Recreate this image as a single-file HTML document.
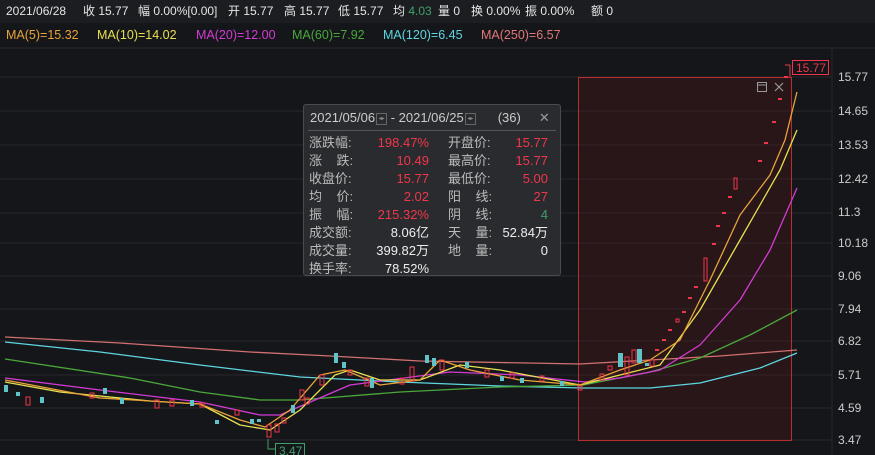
<!DOCTYPE html><html><head><meta charset="utf-8"><style>
body{margin:0;width:875px;height:455px;background:#15161a;overflow:hidden;font-family:"Liberation Sans","Noto Sans CJK SC",sans-serif;position:relative}
.t1{position:absolute;left:0;top:0;width:875px;height:23px;background:#1c1d21;color:#e6e6e6;font-size:12px;line-height:23px;white-space:nowrap}
.t1 span,.t2 span{position:absolute;top:0}
.t2{position:absolute;left:0;top:24px;width:875px;height:22px;font-size:12.5px;line-height:22px;white-space:nowrap}
.tip{position:absolute;left:303px;top:104px;width:256px;height:170px;background:#2a2b2f;border:1px solid #4a4b50;border-radius:3px;color:#bbb;font-size:13px}
.tip .h{position:absolute;left:6px;top:4px;color:#ccc;white-space:nowrap;line-height:18px}
.r{position:absolute;white-space:nowrap;line-height:18px;height:18px}
.red{color:#f0364a}.wh{color:#eee}.gr{color:#3fa06a}
.ax{position:absolute;left:838px;color:#ccc;font-size:12px}
.box{display:inline-block;width:9px;height:10px;border:1px solid #666;vertical-align:middle;font-size:6px;line-height:10px;color:#888;text-align:center}
</style></head><body>
<div class="t1"><span style="left:6px">2021/06/28</span><span style="left:83px">收 15.77</span><span style="left:138px">幅 0.00%[0.00]</span><span style="left:228px">开 15.77</span><span style="left:284px">高 15.77</span><span style="left:338px">低 15.77</span><span style="left:393px">均 <b style="font-weight:normal;color:#3fa06a">4.03</b></span><span style="left:438px">量 0</span><span style="left:471px">换 0.00%</span><span style="left:525px">振 0.00%</span><span style="left:591px">额 0</span></div>
<div class="t2"><span style="left:6px;color:#e8a33a">MA(5)=15.32</span><span style="left:97px;color:#e8e050">MA(10)=14.02</span><span style="left:196px;color:#d43bd4">MA(20)=12.00</span><span style="left:292px;color:#4aa83a">MA(60)=7.92</span><span style="left:383px;color:#5ed6e0">MA(120)=6.45</span><span style="left:481px;color:#e07878">MA(250)=6.57</span></div>
<svg width="875" height="455" style="position:absolute;left:0;top:0">
<g stroke="#26272c" stroke-width="1">
<line x1="0" y1="77" x2="832" y2="77"/><line x1="0" y1="111" x2="832" y2="111"/><line x1="0" y1="145" x2="832" y2="145"/><line x1="0" y1="179" x2="832" y2="179"/><line x1="0" y1="213" x2="832" y2="213"/><line x1="0" y1="243" x2="832" y2="243"/><line x1="0" y1="276" x2="832" y2="276"/><line x1="0" y1="309" x2="832" y2="309"/><line x1="0" y1="341" x2="832" y2="341"/><line x1="0" y1="375" x2="832" y2="375"/><line x1="0" y1="408" x2="832" y2="408"/><line x1="0" y1="440" x2="832" y2="440"/>
<line x1="832" y1="47" x2="832" y2="455"/><line x1="0" y1="48" x2="875" y2="48"/>
</g>
<rect x="578.5" y="77.5" width="213" height="363" fill="rgba(110,25,25,0.22)" stroke="#b8302e"/>
<g fill="none" stroke-width="1.3" stroke-linejoin="round">
<polyline stroke="#d07070" points="5,337 120,343 250,352 330,356 420,361 580,364 650,360 720,356 797,350"/>
<polyline stroke="#5ed6e0" points="5,342 100,352 200,365 300,377 400,382 500,386 583,388 650,388 700,383 760,368 797,353"/>
<polyline stroke="#4aa83a" points="5,359 130,378 200,392 260,400 300,400 400,392 500,387 583,385 650,372 700,358 750,335 797,310"/>
<polyline stroke="#d43bd4" points="5,378 100,390 200,402 260,415 280,415 350,385 450,372 520,375 585,382 620,378 660,370 700,345 740,300 770,250 797,188"/>
<polyline stroke="#e8e050" points="5,382 60,392 150,401 200,404 240,425 270,430 300,410 335,375 350,370 380,380 420,380 460,365 500,370 580,385 620,375 660,365 700,310 740,240 780,170 797,130"/>
<polyline stroke="#e8a33a" points="5,380 100,398 200,404 240,420 265,427 290,410 320,375 345,370 380,385 420,380 440,360 470,370 520,380 580,385 620,370 650,360 680,340 710,280 740,215 770,175 785,140 797,92"/>
</g>
<g stroke="#f0364a" fill="none">
<rect x="26" y="397" width="4" height="8"/><rect x="90" y="393" width="4" height="5"/><rect x="155" y="400" width="4" height="8"/><rect x="170" y="400" width="4" height="6"/><rect x="200" y="403" width="4" height="4"/><rect x="235" y="410" width="4" height="5"/><rect x="267" y="425" width="4" height="12"/><rect x="275" y="424" width="4" height="8"/><rect x="282" y="418" width="4" height="5"/><rect x="300" y="390" width="4" height="10"/><rect x="305" y="398" width="4" height="6"/><rect x="320" y="375" width="4" height="10"/><rect x="348" y="370" width="4" height="5"/><rect x="365" y="378" width="4" height="8"/><rect x="400" y="378" width="4" height="6"/><rect x="410" y="367" width="4" height="14"/><rect x="440" y="360" width="4" height="10"/><rect x="485" y="370" width="4" height="7"/><rect x="510" y="373" width="4" height="5"/><rect x="540" y="376" width="4" height="5"/><rect x="578" y="386" width="4" height="4"/><rect x="600" y="374" width="4" height="6"/><rect x="608" y="366" width="4" height="4"/><rect x="625" y="357" width="4" height="18"/><rect x="632" y="350" width="4" height="13"/><rect x="650" y="360" width="4" height="6"/><rect x="676" y="319" width="3" height="3"/><rect x="704" y="258" width="3" height="23"/><rect x="734" y="178" width="3" height="11"/>
</g>
<g stroke="#f0364a" stroke-width="2">
<line x1="655" y1="350" x2="659" y2="350"/><line x1="662" y1="340" x2="666" y2="340"/><line x1="668" y1="330" x2="672" y2="330"/><line x1="682" y1="312" x2="686" y2="312"/><line x1="688" y1="298" x2="692" y2="298"/><line x1="694" y1="287" x2="698" y2="287"/><line x1="712" y1="244" x2="716" y2="244"/><line x1="716" y1="226" x2="720" y2="226"/><line x1="722" y1="213" x2="726" y2="213"/><line x1="728" y1="197" x2="732" y2="197"/><line x1="758" y1="161" x2="762" y2="161"/><line x1="764" y1="143" x2="768" y2="143"/><line x1="772" y1="122" x2="776" y2="122"/><line x1="778" y1="99" x2="782" y2="99"/><line x1="784" y1="77" x2="788" y2="77"/>
</g>
<g fill="#5fc3c8">
<rect x="4" y="385" width="4" height="7"/><rect x="16" y="392" width="4" height="4"/><rect x="40" y="397" width="4" height="6"/><rect x="103" y="388" width="4" height="6"/><rect x="120" y="398" width="4" height="6"/><rect x="190" y="400" width="4" height="6"/><rect x="215" y="420" width="4" height="4"/><rect x="250" y="419" width="4" height="5"/><rect x="257" y="419" width="4" height="3"/><rect x="291" y="405" width="4" height="8"/><rect x="334" y="353" width="4" height="10"/><rect x="342" y="362" width="4" height="6"/><rect x="370" y="378" width="4" height="10"/><rect x="425" y="355" width="4" height="8"/><rect x="432" y="358" width="4" height="8"/><rect x="465" y="362" width="4" height="6"/><rect x="500" y="376" width="4" height="5"/><rect x="520" y="378" width="4" height="5"/><rect x="560" y="381" width="4" height="5"/><rect x="618" y="353" width="5" height="14"/><rect x="637" y="349" width="5" height="14"/><rect x="645" y="363" width="4" height="3"/>
</g>
<line x1="790" y1="65" x2="790" y2="77" stroke="#f0364a"/><line x1="785" y1="65" x2="790" y2="65" stroke="#f0364a"/>
<rect x="792.5" y="60.5" width="36" height="14" fill="#15161a" stroke="#f0364a"/>
<text x="796" y="72" fill="#f0364a" font-size="12" font-family="Liberation Sans">15.77</text>
<polyline points="268,439 268,449 277,449" fill="none" stroke="#3fa06a"/>
<rect x="275.5" y="443.5" width="29" height="14" fill="#15161a" stroke="#3fa06a"/>
<text x="279" y="455" fill="#3fa06a" font-size="12" font-family="Liberation Sans">3.47</text>
<rect x="757.5" y="82.5" width="9" height="9" fill="none" stroke="#999"/><line x1="757" y1="85" x2="767" y2="85" stroke="#999"/>
<path d="M775 83l8 8M783 83l-8 8" stroke="#999" stroke-width="1.2"/>
</svg>
<div class="ax" style="top:70px">15.77</div><div class="ax" style="top:104px">14.65</div><div class="ax" style="top:138px">13.53</div><div class="ax" style="top:172px">12.42</div><div class="ax" style="top:205px">11.3</div><div class="ax" style="top:236px">10.18</div><div class="ax" style="top:269px">9.06</div><div class="ax" style="top:302px">7.94</div><div class="ax" style="top:334px">6.82</div><div class="ax" style="top:368px">5.71</div><div class="ax" style="top:401px">4.59</div><div class="ax" style="top:433px">3.47</div>
<div class="tip">
<div class="h">2021/05/06<span class="box" style="margin-left:1px">◂▸</span> - 2021/06/25<span class="box" style="margin-left:1px">◂▸</span><span style="margin-left:22px">(36)</span><span style="margin-left:18px;color:#999">✕</span></div>
<div style="position:absolute;left:4px;right:4px;top:25px;border-top:1px solid #555"></div>
<div class="r" style="left:5px;top:29px">涨跌幅:</div><div class="r red" style="right:131px;top:29px">198.47%</div><div class="r" style="left:144px;top:29px">开盘价:</div><div class="r red" style="right:12px;top:29px">15.77</div>
<div class="r" style="left:5px;top:47px">涨&nbsp;&nbsp;&nbsp;&nbsp;跌:</div><div class="r red" style="right:131px;top:47px">10.49</div><div class="r" style="left:144px;top:47px">最高价:</div><div class="r red" style="right:12px;top:47px">15.77</div>
<div class="r" style="left:5px;top:65px">收盘价:</div><div class="r red" style="right:131px;top:65px">15.77</div><div class="r" style="left:144px;top:65px">最低价:</div><div class="r red" style="right:12px;top:65px">5.00</div>
<div class="r" style="left:5px;top:83px">均&nbsp;&nbsp;&nbsp;&nbsp;价:</div><div class="r red" style="right:131px;top:83px">2.02</div><div class="r" style="left:144px;top:83px">阳&nbsp;&nbsp;&nbsp;&nbsp;线:</div><div class="r red" style="right:12px;top:83px">27</div>
<div class="r" style="left:5px;top:101px">振&nbsp;&nbsp;&nbsp;&nbsp;幅:</div><div class="r red" style="right:131px;top:101px">215.32%</div><div class="r" style="left:144px;top:101px">阴&nbsp;&nbsp;&nbsp;&nbsp;线:</div><div class="r gr" style="right:12px;top:101px">4</div>
<div class="r" style="left:5px;top:119px">成交额:</div><div class="r wh" style="right:131px;top:119px">8.06亿</div><div class="r" style="left:144px;top:119px">天&nbsp;&nbsp;&nbsp;&nbsp;量:</div><div class="r wh" style="right:12px;top:119px">52.84万</div>
<div class="r" style="left:5px;top:137px">成交量:</div><div class="r wh" style="right:131px;top:137px">399.82万</div><div class="r" style="left:144px;top:137px">地&nbsp;&nbsp;&nbsp;&nbsp;量:</div><div class="r wh" style="right:12px;top:137px">0</div>
<div class="r" style="left:5px;top:155px">换手率:</div><div class="r wh" style="right:131px;top:155px">78.52%</div>
</div>
</body></html>
